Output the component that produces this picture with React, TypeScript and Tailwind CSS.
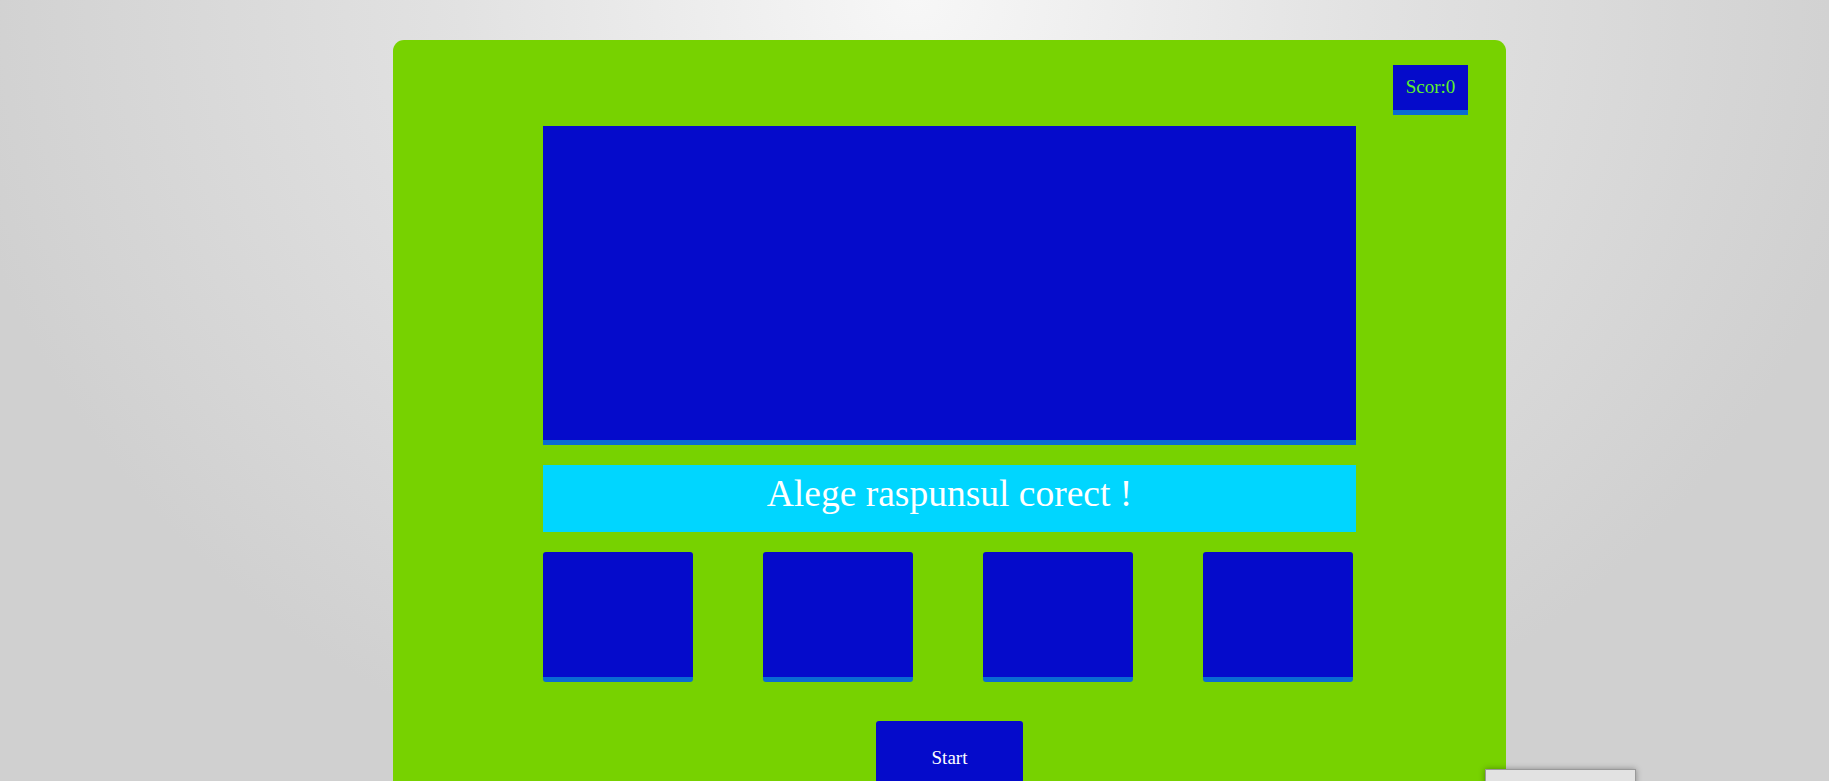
export default function App() {
  const choices = [0, 1, 2, 3]

  return (
    <div className="relative h-[781px] w-full overflow-hidden bg-[radial-gradient(ellipse_at_50%_0%,#f7f7f7_0%,#e2e2e2_35%,#d0d0d0_75%)] font-['Liberation_Serif',serif]">
      <div className="relative ml-[393px] mt-[40px] h-[760px] w-[1113px] rounded-[11px] bg-[#77d200] pt-[86px]">
        <div className="absolute right-[38px] top-[25px] flex h-[50px] w-[75px] items-center justify-center border-b-[5px] border-[#0a6bd2] bg-[#050bcb] text-[19px] text-[#5ef02a]">
          Scor:0
        </div>

        <div className="mx-[150px] flex flex-col">
          <div className="h-[319px] w-full border-b-[5px] border-[#0a6bd2] bg-[#050bcb]" />

          <div className="mt-[20px] flex h-[67px] w-full justify-center bg-[#00d6ff] pt-[7px] text-[37.5px] leading-[44px] text-white">
            Alege raspunsul corect !
          </div>

          <div className="mt-[20px] flex gap-[70px]">
            {choices.map((c) => (
              <button
                key={c}
                className="h-[130px] w-[150px] rounded-[3px] border-b-[5px] border-[#0a6bd2] bg-[#050bcb]"
              />
            ))}
          </div>
        </div>

        <div className="mt-[39px] flex justify-center">
          <button className="flex h-[74px] w-[147px] items-center justify-center rounded-t-[3px] bg-[#050bcb] text-[19px] text-white">
            Start
          </button>
        </div>
      </div>

      <div className="absolute left-[1485px] top-[769px] h-[40px] w-[151px] border border-[#999] bg-[#e2e2e2] shadow-[0_0_6px_rgba(0,0,0,0.35)]" />
    </div>
  )
}
